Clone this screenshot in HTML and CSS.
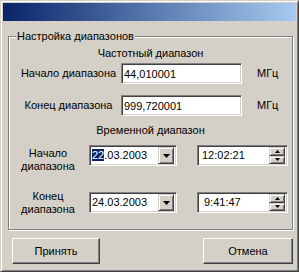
FILE: index.html
```html
<!DOCTYPE html>
<html lang="ru">
<head>
  <meta charset="UTF-8" />
  <title>Настройка диапазонов</title>
  <link rel="stylesheet" href="styles.css">
</head>
<body>

<div class="window">
  <div class="titlebar"></div>

  <fieldset class="group">
    <legend>Настройка диапазонов</legend>

    <div class="caption">Частотный диапазон</div>
    <div class="row freq-row">
      <label class="row-label" for="freq-start">Начало диапазона</label>
      <input class="edit" id="freq-start" type="text" value="44,010001">
      <span class="unit">МГц</span>
    </div>
    <div class="row freq-row">
      <label class="row-label" for="freq-end">Конец диапазона</label>
      <input class="edit" id="freq-end" type="text" value="999,720001">
      <span class="unit">МГц</span>
    </div>

    <div class="caption time-caption">Временной диапазон</div>
    <div class="row time-row">
      <div class="row-label two-line start-label">Начало<br>диапазона</div>
      <div class="picker date">
        <span class="value"><span class="sel">22</span>.03.2003</span>
        <span class="drop">
          <svg width="7" height="4" viewBox="0 0 7 4"><path d="M0 0h7L3.5 4z" fill="#000"/></svg>
        </span>
      </div>
      <div class="picker time">
        <span class="value">12:02:21</span>
        <span class="spin">
          <span class="spin-btn"><svg width="5" height="3" viewBox="0 0 5 3"><path d="M2.5 0L5 3H0z" fill="#000"/></svg></span>
          <span class="spin-btn"><svg width="5" height="3" viewBox="0 0 5 3"><path d="M0 0h5L2.5 3z" fill="#000"/></svg></span>
        </span>
      </div>
    </div>
    <div class="row time-row">
      <div class="row-label two-line">Конец<br>диапазона</div>
      <div class="picker date">
        <span class="value">24.03.2003</span>
        <span class="drop">
          <svg width="7" height="4" viewBox="0 0 7 4"><path d="M0 0h7L3.5 4z" fill="#000"/></svg>
        </span>
      </div>
      <div class="picker time">
        <span class="value short">9:41:47</span>
        <span class="spin">
          <span class="spin-btn"><svg width="5" height="3" viewBox="0 0 5 3"><path d="M2.5 0L5 3H0z" fill="#000"/></svg></span>
          <span class="spin-btn"><svg width="5" height="3" viewBox="0 0 5 3"><path d="M0 0h5L2.5 3z" fill="#000"/></svg></span>
        </span>
      </div>
    </div>
  </fieldset>

  <div class="buttons">
    <button type="button" class="btn ok-btn">Принять</button>
    <button type="button" class="btn cancel-btn">Отмена</button>
  </div>
</div>

</body>
</html>
```

FILE: styles.css
```css
* {
  box-sizing: border-box;
}
body {
  margin: 0;
  font-family: "Liberation Sans", Arial, sans-serif;
  font-size: 11px;
  line-height: 13px;
  color: #000;
  background: #d4d0c8;
}
.window {
  width: 299px;
  height: 272px;
  padding: 2px;
  background: #d4d0c8;
  border: 1px solid;
  border-color: #d4d0c8 #404040 #404040 #d4d0c8;
  box-shadow: inset 1px 1px #fff, inset -1px -1px #808080;
}
.titlebar {
  height: 18px;
  background: linear-gradient(to right, #0a246a, #a6caf0);
}
.group {
  margin: 9px 3px 0 5px;
  padding: 0 0 16px;
  min-width: 0;
  border: 1px solid #808080;
  box-shadow: inset 1px 1px #fff, 1px 1px #fff;
}
.group legend {
  margin-left: 7px;
  padding: 0 1px;
  background: #d4d0c8;
}
.caption {
  margin-top: 4px;
  text-align: center;
}
.time-caption {
  margin-top: 8px;
}
.row {
  display: flex;
  align-items: center;
  height: 21px;
}
.freq-row {
  margin-top: 3px;
  padding-left: 7px;
}
.freq-row + .freq-row {
  margin-top: 11px;
}
.row-label {
  width: 105px;
  text-align: center;
}
.edit {
  width: 121px;
  height: 21px;
  margin: 0;
  padding: 0 2px;
  font: inherit;
  color: #000;
  background: #fff;
  border: 1px solid;
  border-color: #808080 #fff #fff #808080;
  box-shadow: inset 1px 1px #404040, inset -1px -1px #d4d0c8;
  outline: none;
}
.unit {
  margin-left: 15px;
}
.time-row {
  margin-top: 8px;
}
.time-row + .time-row {
  margin-top: 26px;
}
.time-row .row-label {
  width: 78px;
}
.start-label {
  align-self: flex-start;
  margin-top: 2px;
}
.picker {
  display: flex;
  align-items: center;
  width: 88px;
  height: 21px;
  margin-left: 2px;
  padding: 2px;
  background: #fff;
  border: 1px solid;
  border-color: #808080 #fff #fff #808080;
  box-shadow: inset 1px 1px #404040, inset -1px -1px #d4d0c8;
}
.picker.time {
  width: 91px;
  margin-left: 20px;
}
.picker .value {
  flex: 1;
}
.picker.time .value {
  padding-left: 2px;
}
.picker.time .value.short {
  padding-left: 4px;
}
.sel {
  background: #0a246a;
  color: #fff;
}
.drop,
.spin-btn {
  display: flex;
  align-items: center;
  justify-content: center;
  background: #d4d0c8;
  border: 1px solid;
  border-color: #d4d0c8 #404040 #404040 #d4d0c8;
  box-shadow: inset 1px 1px #fff, inset -1px -1px #808080;
}
.drop {
  width: 16px;
  height: 17px;
}
.spin {
  display: flex;
  flex-direction: column;
  width: 16px;
  height: 17px;
}
.spin-btn {
  flex: 1;
}
.buttons {
  display: flex;
  justify-content: space-between;
  margin-top: 8px;
  padding: 0 3px 0 9px;
}
.btn {
  height: 26px;
  padding: 0;
  font: inherit;
  color: #000;
  background: #d4d0c8;
  border: 1px solid;
  border-color: #fff #404040 #404040 #fff;
  box-shadow: inset -1px -1px #808080, inset 1px 1px #d4d0c8;
}
.ok-btn {
  width: 88px;
}
.cancel-btn {
  width: 90px;
}
```
